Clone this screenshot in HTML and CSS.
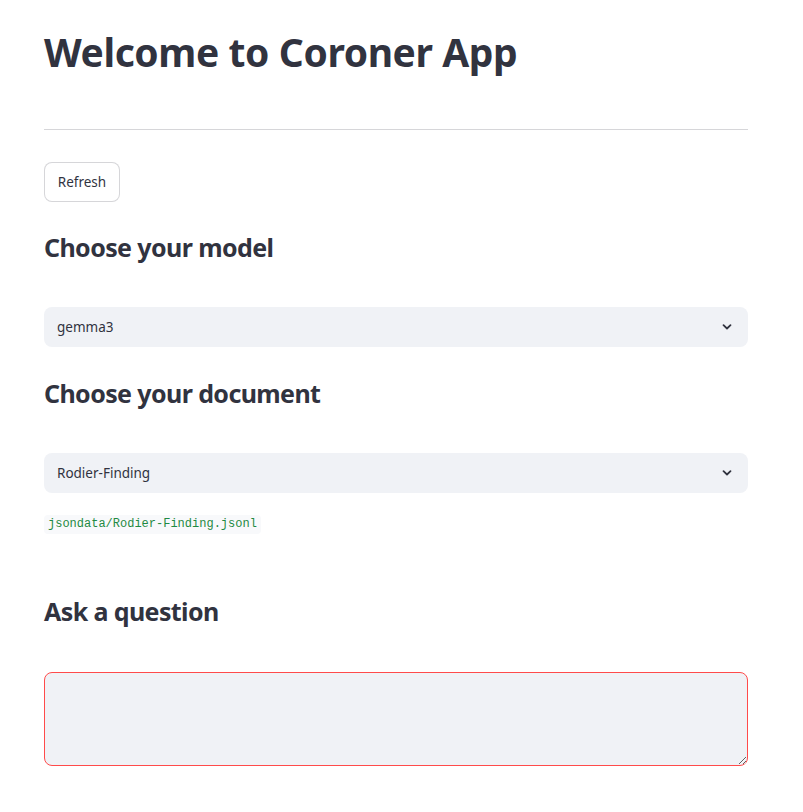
FILE: index.html
```html
<!DOCTYPE html>
<html lang="en">
<head>
<meta charset="utf-8">
<title>Coroner App</title>
<link rel="stylesheet" href="styles.css">
</head>
<body>
<main class="main">
  <h1 class="title">Welcome to Coroner App</h1>
  <hr class="divider">
  <div class="btn-row"><button class="btn" type="button">Refresh</button></div>
  <h3 class="heading h-model">Choose your model</h3>
  <div class="select">
    <span class="select-value">gemma3</span>
    <svg class="chevron" width="16" height="16" viewBox="0 0 16 16" aria-hidden="true"><path d="M4.5 6.2 L8 9.5 L11.5 6.2" fill="none" stroke="#31333f" stroke-width="1.8" stroke-linecap="round" stroke-linejoin="round"/></svg>
  </div>
  <h3 class="heading h-doc">Choose your document</h3>
  <div class="select">
    <span class="select-value">Rodier-Finding</span>
    <svg class="chevron" width="16" height="16" viewBox="0 0 16 16" aria-hidden="true"><path d="M4.5 6.2 L8 9.5 L11.5 6.2" fill="none" stroke="#31333f" stroke-width="1.8" stroke-linecap="round" stroke-linejoin="round"/></svg>
  </div>
  <div class="code-row"><code class="code">jsondata/Rodier-Finding.jsonl</code></div>
  <h3 class="heading h-ask">Ask a question</h3>
  <textarea class="question" aria-label="Ask a question"></textarea>
</main>
</body>
</html>
```
FILE: styles.css
```css
html, body {
  margin: 0;
  padding: 0;
  background: #ffffff;
}
body {
  font-family: "Noto Sans", "Liberation Sans", sans-serif;
  color: #31333f;
}
.main {
  width: 704px;
  margin-left: 44px;
  display: flex;
  flex-direction: column;
}
.title {
  margin: 0;
  padding-top: 24px;
  font-size: 39px;
  line-height: 56px;
  font-weight: 700;
  letter-spacing: -0.4px;
  height: 56px;
}
.divider {
  margin: 49px 0 0 0;
  border: 0;
  border-top: 1px solid rgba(49, 51, 63, 0.2);
  height: 0;
}
.btn-row {
  margin-top: 32px;
  display: flex;
}
.btn {
  height: 40px;
  width: 76px;
  padding: 0;
  border: 1px solid rgba(49, 51, 63, 0.2);
  border-radius: 8px;
  background: #ffffff;
  color: #31333f;
  font-family: "Noto Sans", "Liberation Sans", sans-serif;
  font-size: 13.5px;
}
.heading {
  margin: 0;
  font-size: 25px;
  line-height: 34px;
  font-weight: 700;
  letter-spacing: -0.6px;
}
.h-model { margin-top: 28px; }
.h-doc { margin-top: 29px; }
.h-ask { margin-top: 60px; }
.select {
  margin-top: 43px;
  height: 40px;
  border-radius: 8px;
  background: #f0f2f6;
  display: flex;
  align-items: center;
  justify-content: space-between;
  padding: 0 13px 0 13px;
}
.select-value {
  font-size: 13.5px;
}
.chevron {
  display: block;
}
.code-row {
  margin-top: 22px;
  display: flex;
}
.code {
  font-family: "Liberation Mono", "DejaVu Sans Mono", monospace;
  font-size: 12px;
  line-height: 19px;
  padding: 0 4px;
  border-radius: 4px;
  background: #f8f9fb;
  color: #1f8a43;
}
.question {
  margin-top: 44px;
  height: 94px;
  box-sizing: border-box;
  width: 100%;
  border: 1px solid #ff4b4b;
  border-radius: 8px;
  background: #f0f2f6;
  resize: vertical;
  font-family: "Noto Sans", sans-serif;
  font-size: 14px;
  padding: 8px 12px;
  outline: none;
}
```
